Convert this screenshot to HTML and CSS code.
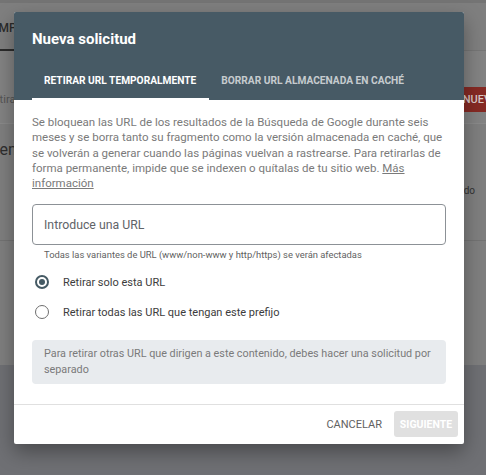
FILE: index.html
```html
<!DOCTYPE html>
<html lang="es">
<head>
    <meta charset="UTF-8">
    <meta name="viewport" content="width=device-width, initial-scale=1.0">
    <title>Nueva solicitud</title>
    <link rel="stylesheet" href="styles.css">
</head>
<body>

    <!-- Page behind the dialog (already dimmed) -->
    <div class="page">
        <div class="page-top"></div>
        <div class="page-tabs">
            <span class="page-tab">IMP</span>
        </div>
        <div class="page-bar">
            <span class="page-muted">Retira</span>
            <span class="page-btn">NUEVA</span>
        </div>
        <div class="page-card">
            <div class="page-heading">Veces en</div>
            <div class="page-row"><span></span><span class="page-small">do</span></div>
        </div>
    </div>

    <div class="dialog">
        <div class="dialog-header">
            <h2 class="dialog-title">Nueva solicitud</h2>
            <div class="tabs">
                <div class="tab active">RETIRAR URL TEMPORALMENTE</div>
                <div class="tab">BORRAR URL ALMACENADA EN CACHÉ</div>
            </div>
        </div>

        <div class="dialog-body">
            <p class="intro">
                Se bloquean las URL de los resultados de la Búsqueda de Google durante seis
                meses y se borra tanto su fragmento como la versión almacenada en caché, que
                se volverán a generar cuando las páginas vuelvan a rastrearse. Para retirarlas de
                forma permanente, impide que se indexen o quítalas de tu sitio web. <a href="#">Más información</a>
            </p>

            <input class="url-input" type="text" placeholder="Introduce una URL">
            <div class="hint">Todas las variantes de URL (www/non-www y http/https) se verán afectadas</div>

            <label class="radio">
                <span class="radio-dot checked"></span>
                Retirar solo esta URL
            </label>
            <label class="radio">
                <span class="radio-dot"></span>
                Retirar todas las URL que tengan este prefijo
            </label>

            <div class="note">
                Para retirar otras URL que dirigen a este contenido, debes hacer una solicitud por
                separado
            </div>
        </div>

        <div class="dialog-footer">
            <button class="btn-text">CANCELAR</button>
            <button class="btn-disabled">SIGUIENTE</button>
        </div>
    </div>

</body>
</html>
```

FILE: styles.css
```css
body {
    font-family: Roboto, "Noto Sans", Arial, sans-serif;
    margin: 0;
    background-color: #6f7074;
    width: 486px;
    height: 475px;
    overflow: hidden;
    position: relative;
}

/* Dimmed page behind */
.page {
    height: 365px;
    background-color: #7f7f7f;
    overflow: hidden;
}
.page-top {
    height: 3px;
    background-color: #747474;
}
.page-tabs {
    height: 47px;
    border-bottom: 1px solid #767676;
}
.page-tab {
    display: inline-block;
    margin-left: -5px;
    padding: 18px 0 14px;
    font-size: 12px;
    font-weight: 500;
    color: #2b2b2b;
    border-bottom: 2px solid #2b2b2b;
}
.page-bar {
    height: 48px;
    padding-top: 24px;
    display: flex;
    justify-content: space-between;
    align-items: center;
    border-bottom: 1px solid #8a8a8a;
    background-color: #838383;
}
.page-muted {
    font-size: 11px;
    color: #555;
    margin-left: -13px;
}
.page-btn {
    background-color: #862a24;
    color: #d9c9c8;
    font-size: 11px;
    font-weight: 500;
    padding: 6px 10px;
    margin-right: -22px;
}
.page-card {
    height: 100px;
    border-bottom: 1px solid #737373;
}
.page-heading {
    font-size: 16px;
    color: #2f2f2f;
    margin: 16px 0 0 -48px;
}
.page-row {
    display: flex;
    justify-content: space-between;
    margin-top: 26px;
}
.page-small {
    font-size: 10px;
    color: #333;
    margin-right: 11px;
}

/* Dialog */
.dialog {
    position: absolute;
    top: 12px;
    left: 14px;
    width: 450px;
    background-color: #ffffff;
    border-radius: 2px;
    box-shadow: 0 8px 20px rgba(0, 0, 0, 0.35);
    overflow: hidden;
}
.dialog-header {
    background-color: #475a65;
    padding: 0 18px;
}
.dialog-title {
    margin: 0;
    padding: 17px 0 0;
    height: 35px;
    font-size: 15px;
    font-weight: 700;
    line-height: 20px;
    color: #ffffff;
}
.tabs {
    display: flex;
}
.tab {
    padding: 10px 12px 10px 12px;
    font-size: 10.2px;
    font-weight: 700;
    color: rgba(255, 255, 255, 0.7);
    line-height: 14px;
    border-bottom: 2px solid transparent;
}
.tab.active {
    color: #ffffff;
    border-bottom-color: #ffffff;
    padding-right: 13px;
}

.dialog-body {
    padding: 15px 18px 20px;
}
.intro {
    margin: 0 0 13px;
    font-size: 11.5px;
    line-height: 15.3px;
    color: #7a7a7a;
}
.intro a {
    color: #7a7a7a;
}
.url-input {
    box-sizing: border-box;
    width: 100%;
    height: 41px;
    border: 1px solid #8c9196;
    border-radius: 4px;
    padding: 0 11px;
    font-family: inherit;
    font-size: 12.3px;
}
.url-input::placeholder {
    color: #5f6368;
}
.hint {
    font-size: 9.4px;
    color: #616161;
    padding: 4px 0 0 12px;
    line-height: 12px;
}
.radio {
    display: flex;
    align-items: center;
    gap: 14px;
    font-size: 11px;
    color: #3c3c3c;
    height: 30px;
    padding-left: 3px;
}
.radio:first-of-type {
    margin-top: 6px;
}
.radio-dot {
    box-sizing: border-box;
    width: 14px;
    height: 14px;
    border: 1.5px solid #6e6e6e;
    border-radius: 50%;
    display: flex;
    align-items: center;
    justify-content: center;
}
.radio-dot.checked {
    border: 2px solid #455a64;
}
.radio-dot.checked::after {
    content: "";
    width: 6px;
    height: 6px;
    border-radius: 50%;
    background-color: #455a64;
}
.note {
    margin-top: 13px;
    background-color: #e8ebee;
    border-radius: 4px;
    padding: 6px 12px;
    font-size: 10.8px;
    line-height: 16px;
    color: #7a7a7a;
}

.dialog-footer {
    border-top: 1px solid #e0e0e0;
    display: flex;
    justify-content: flex-end;
    align-items: center;
    gap: 12px;
    padding: 6px 6px 7px;
}
.btn-text {
    background: none;
    border: none;
    font-family: inherit;
    font-size: 11px;
    color: #616161;
    padding: 0;
}
.btn-disabled {
    background-color: #e0e0e0;
    border: none;
    border-radius: 3px;
    width: 64px;
    height: 26px;
    font-family: inherit;
    font-size: 10.5px;
    font-weight: 700;
    color: #ffffff;
    padding: 0;
}
```
